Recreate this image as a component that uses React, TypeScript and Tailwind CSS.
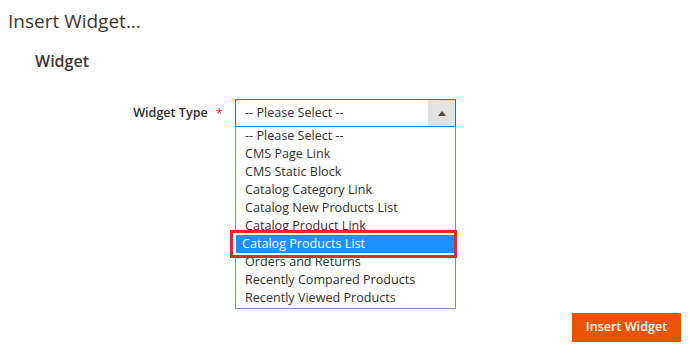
const items = [
  '-- Please Select --',
  'CMS Page Link',
  'CMS Static Block',
  'Catalog Category Link',
  'Catalog New Products List',
  'Catalog Product Link',
  'Catalog Products List',
  'Orders and Returns',
  'Recently Compared Products',
  'Recently Viewed Products',
];

const selected = 'Catalog Products List';

export default function App() {
  return (
    <div className="w-[690px] h-[354px] bg-white text-[#303030] font-['Open_Sans',sans-serif] flex flex-col overflow-hidden">
      <h1 className="pl-[8px] pt-[8px] text-[19px] leading-[26px] text-[#41362f]">Insert Widget...</h1>
      <h2 className="pl-[35px] mt-[16px] text-[16px] leading-[22px] font-semibold text-[#41362f]">Widget</h2>

      <div className="flex mt-[27px]">
        <div className="w-[235px] flex justify-end items-start pt-[4px] pr-[12px]">
          <span className="text-[12.6px] leading-[20px] font-semibold text-[#303030]">Widget Type</span>
          <span className="ml-[8px] text-[13px] leading-[20px] text-[#e22626]">*</span>
        </div>
        <div className="w-[221px] flex flex-col">
          <div className="h-[28px] border border-[#007bdb] flex items-stretch">
            <span className="flex-1 pl-[9px] text-[12.6px] leading-[25px] text-[#303030]">-- Please Select --</span>
            <span className="w-[27px] bg-[#e3e3e3] flex items-center justify-center">
              <svg width="8" height="5" viewBox="0 0 8 5"><path d="M0 5 L4 0 L8 5 Z" fill="#514943" /></svg>
            </span>
          </div>
          <ul className="border border-[#7f8bc7] border-t-0 pb-[1px]">
            {items.map((it) =>
              it === selected ? (
                <li key={it} className="relative h-[18px]">
                  <div className="absolute -left-[6px] -right-[2px] -top-[5px] -bottom-[5px] border-[3px] border-[#e02b27] bg-white pt-[2px] pl-[3px]">
                    <div className="bg-[#1e90ff] text-white h-[18px] pl-[6px] text-[12.6px] leading-[18px]">{it}</div>
                  </div>
                </li>
              ) : (
                <li key={it} className="h-[18px] pl-[9px] text-[12.6px] leading-[18px] text-[#303030]">{it}</li>
              )
            )}
          </ul>
        </div>
      </div>

      <div className="flex justify-end pr-[9px] mt-auto mb-[12px]">
        <button className="h-[29px] w-[109px] bg-[#eb5202] text-white text-[12.6px] font-semibold">Insert Widget</button>
      </div>
    </div>
  );
}
